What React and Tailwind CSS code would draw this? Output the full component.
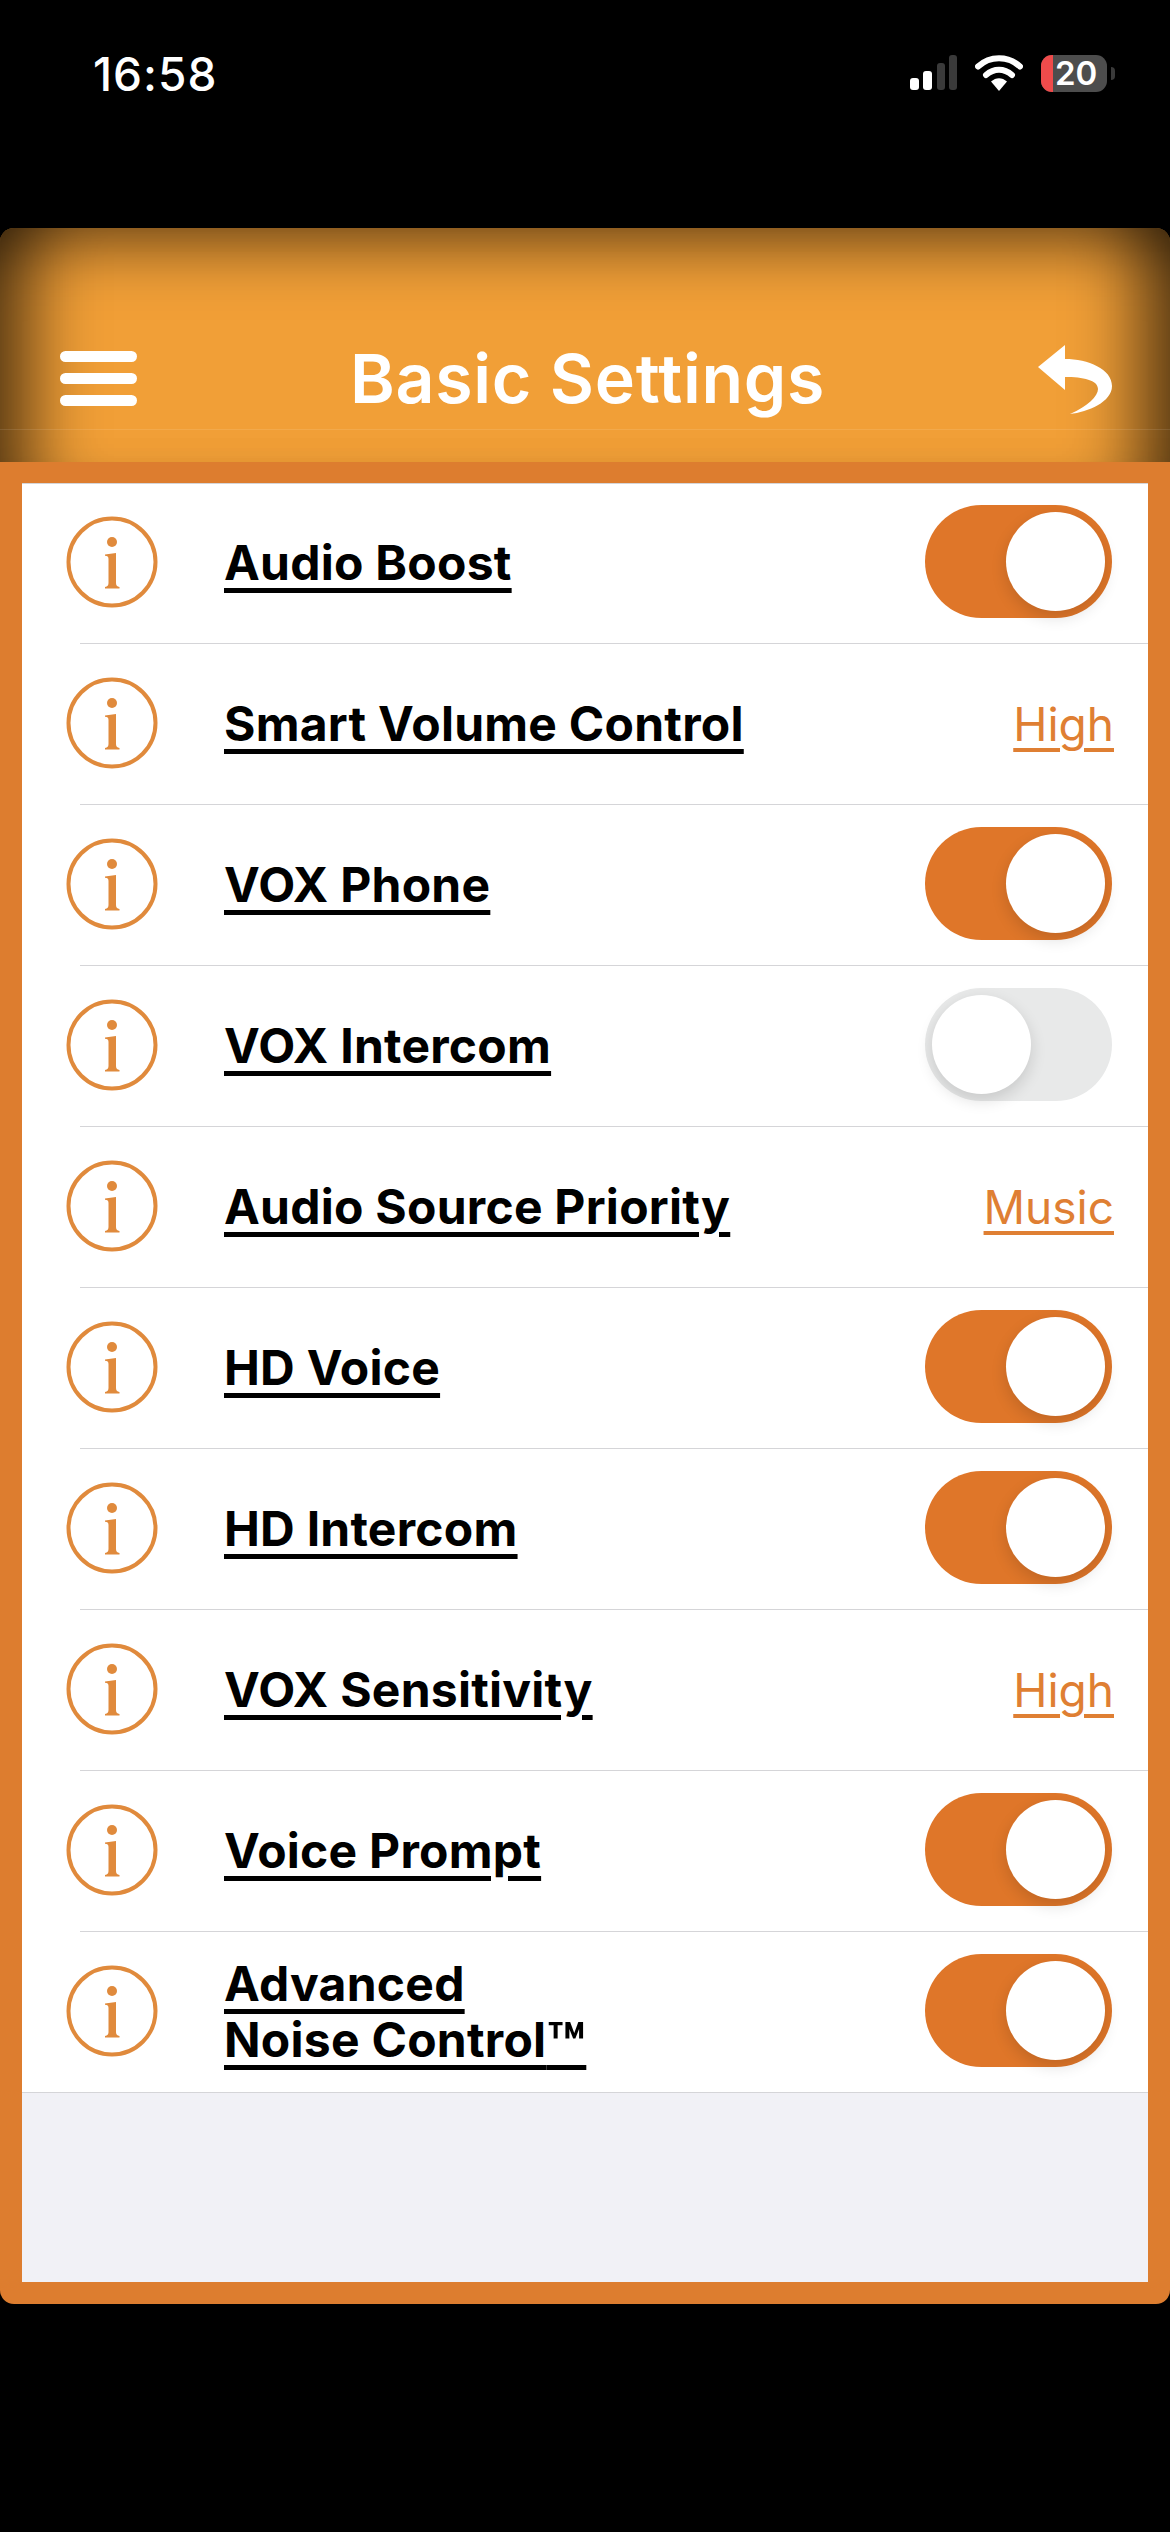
import React from "react";

const rows = [
  { label: "Audio Boost", on: true },
  { label: "Smart Volume Control", value: "High" },
  { label: "VOX Phone", on: true },
  { label: "VOX Intercom", on: false },
  { label: "Audio Source Priority", value: "Music" },
  { label: "HD Voice", on: true },
  { label: "HD Intercom", on: true },
  { label: "VOX Sensitivity", value: "High" },
  { label: "Voice Prompt", on: true },
  {
    label: (
      <>
        Advanced
        <br />
        Noise Control<span className="align-[-10px] text-[62px] leading-[0]">™</span>
      </>
    ),
    on: true,
  },
];

const StatusBar = () => (
  <div className="flex h-[228px] items-start justify-between bg-black pl-[93px] pr-[55px] pt-[46px] text-white">
    <span className="text-[46px] font-medium leading-[56px] tracking-[1px]">16:58</span>
    <div className="mt-[9px] flex items-start">
      <div className="flex h-[35px] items-end gap-[4.5px]">
        <span className="h-[12px] w-[9px] rounded-[3px] bg-white" />
        <span className="h-[19px] w-[9px] rounded-[3px] bg-white" />
        <span className="h-[27px] w-[8px] rounded-[3px] bg-[#3a3a3a]" />
        <span className="h-[35px] w-[8px] rounded-[3px] bg-[#3a3a3a]" />
      </div>
      <svg className="ml-[18px]" width="48" height="36" viewBox="0 0 48 36" fill="none">
        <path d="M3 11.5C15 0.5 33 0.5 45 11.5" stroke="white" strokeWidth="6" strokeLinecap="round" />
        <path d="M11 20C19 13 29 13 37 20" stroke="white" strokeWidth="6" strokeLinecap="round" />
        <path d="M16 26.5C21 22 27 22 32 26.5L24 36Z" fill="white" />
      </svg>
      <div className="ml-[18px] flex h-[37px] w-[66px] items-center rounded-[11px] bg-[#4d4d4d]">
        <span className="h-full w-[12px] rounded-l-[11px] bg-[#ef4b4b]" />
        <span className="ml-[2px] text-[33px] font-semibold leading-[37px]">20</span>
      </div>
      <span className="ml-[4px] mt-[12px] h-[13px] w-[4px] rounded-r-full bg-[#3a3a3a]" />
    </div>
  </div>
);

const BackIcon = () => (
  <svg width="74" height="70" viewBox="0 0 74 70" fill="white">
    <path d="M0 23L27 1V15C50 15 74 25 74 42C74 58 50 68 32 70C50 62 60 52 60 45C60 36 45 33 27 33V46Z" />
  </svg>
);

const Header = () => (
  <header className="h-[234px] rounded-t-[14px] bg-[#f19f37] pt-[100px] shadow-[inset_0_70px_60px_-50px_rgba(0,0,0,0.5),inset_90px_0_70px_-60px_rgba(0,0,0,0.65),inset_-90px_0_70px_-60px_rgba(0,0,0,0.65)]">
    <div className="flex h-[102px] items-center justify-between border-b border-white/10 pl-[60px] pr-[58px]">
      <div className="flex w-[77px] flex-col gap-[11px] blur-[0.6px]">
        <span className="h-[11px] rounded-full bg-white" />
        <span className="h-[11px] rounded-full bg-white" />
        <span className="h-[11px] rounded-full bg-white" />
      </div>
      <h1 className="mb-[2px] text-[68px] font-semibold leading-none tracking-[0.7px] text-white">Basic Settings</h1>
      <BackIcon />
    </div>
  </header>
);

const InfoIcon = () => (
  <svg className="-ml-[14px] mb-[3px] shrink-0" width="92" height="92" viewBox="0 0 92 92" fill="#e08a3c">
    <circle cx="46" cy="46" r="43.5" fill="none" stroke="#e08a3c" strokeWidth="4" />
    <circle cx="46" cy="26" r="5" />
    <path d="M39 38.5L50 37V67C50 69.5 51 70.5 53.5 71V72.5H39V71C41.5 70.5 42.5 69.5 42.5 67V43C42.5 40.5 41.5 40 39 39.8Z" />
  </svg>
);

const Toggle = ({ on }) => (
  <div
    className={`mb-[3px] flex h-[113px] w-[187px] items-center rounded-full px-[7px] ${
      on ? "justify-end bg-[#df7629]" : "justify-start bg-[#e8e9e9]"
    }`}
  >
    <span className="h-[99px] w-[99px] rounded-full bg-white shadow-[0_6px_16px_rgba(0,0,0,0.14)]" />
  </div>
);

const SettingRow = ({ row, last }) => (
  <div className={`flex h-[161px] items-center border-b border-[#d5d5d8] pr-[34px] ${last ? "pl-[58px]" : "ml-[58px]"}`}>
    <InfoIcon />
    <div className="ml-[66px] flex-1 text-[48px] font-bold leading-[56px] tracking-[0.25px] text-black underline decoration-[5px] underline-offset-[8px]">
      {row.label}
    </div>
    {row.value ? (
      <span className="text-[46px] leading-none text-[#df7f33] underline decoration-[4px] underline-offset-[7px]">
        {row.value}
      </span>
    ) : (
      <div className="mr-[2px]">
        <Toggle on={row.on} />
      </div>
    )}
  </div>
);

export default function App() {
  return (
    <div className="min-h-[2532px] bg-black font-['Inter',sans-serif]">
      <StatusBar />
      <Header />
      <div className="rounded-b-[14px] bg-[#dd7d2f] px-[22px] pb-[22px] pt-[21px]">
        <div className="bg-white shadow-[inset_0_1px_0_#d5d5d8]">
          {rows.map((row, i) => (
            <SettingRow key={i} row={row} last={i === rows.length - 1} />
          ))}
        </div>
        <div className="h-[189px] bg-[#f1f1f6]" />
      </div>
    </div>
  );
}
